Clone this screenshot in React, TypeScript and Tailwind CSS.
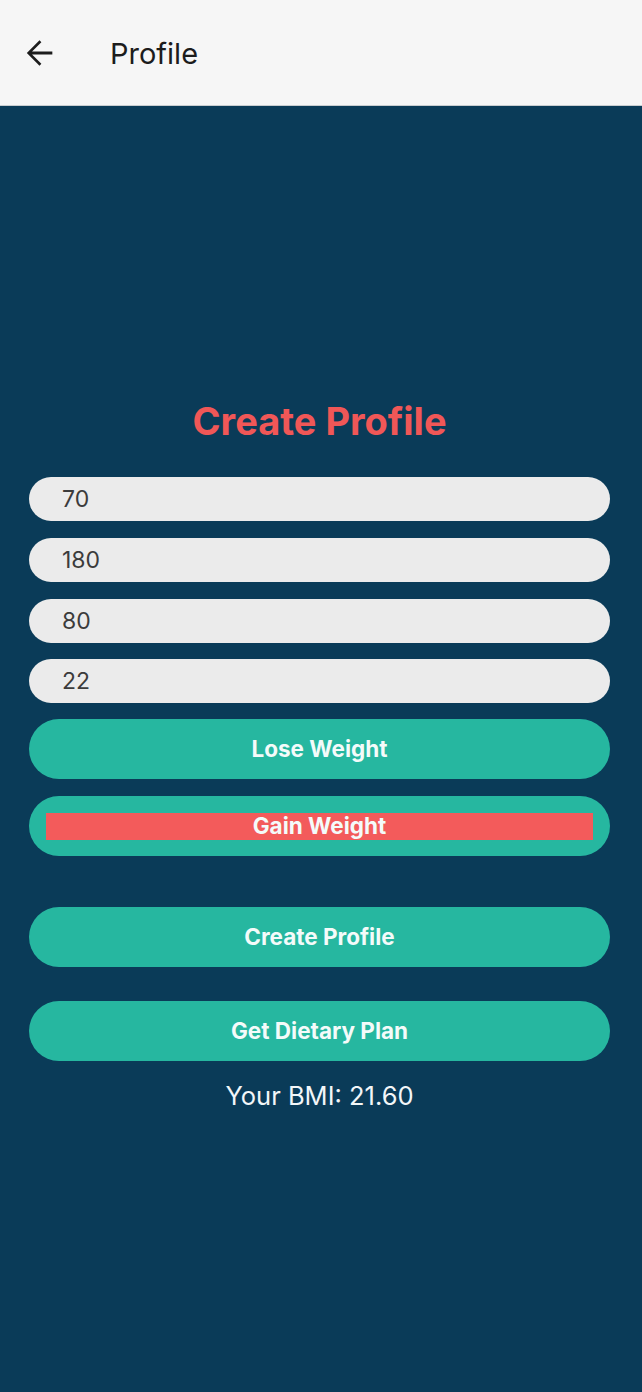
import React from 'react';

const font = { fontFamily: 'Inter, "Noto Sans", sans-serif' };

function Field({ value }: { value: string }) {
  return (
    <div className="h-[44px] w-full rounded-full bg-[#ebebeb] flex items-center pl-[33px] text-[23px] text-[#3b3b3b]">
      {value}
    </div>
  );
}

function TealButton({ label }: { label: string }) {
  return (
    <button className="h-[60px] w-full rounded-full bg-[#26b7a0] flex items-center justify-center text-[22.5px] font-bold text-[#f4fbfa]">
      {label}
    </button>
  );
}

export default function App() {
  return (
    <div className="min-h-screen flex flex-col bg-[#0a3b58]" style={font}>
      {/* Header */}
      <header className="h-[106px] shrink-0 bg-[#f6f6f6] border-b border-[#c9cdd0] flex items-center">
        <svg
          className="ml-[19px]"
          width="40"
          height="40"
          viewBox="0 0 24 24"
          fill="#1c1c1c"
        >
          <path d="M20 11.1H7.83l5.59-5.59L12.3 4.4l-7.6 7.6 7.6 7.6 1.12-1.12-5.59-5.58H20v-1.8z" />
        </svg>
        <span className="ml-[51px] pt-[3px] text-[29px] text-[#1c1c1c]">Profile</span>
      </header>

      {/* Form */}
      <main className="flex-1 flex flex-col pl-[29px] pr-[32px]">
        <h1 className="mt-[292px] text-center text-[38px] leading-[46px] font-bold text-[#f05757]">
          Create Profile
        </h1>

        <div className="mt-[33px] flex flex-col gap-[17px]">
          <Field value="70" />
          <Field value="180" />
          <Field value="80" />
          <div className="-mt-px">
            <Field value="22" />
          </div>
          <div className="-mt-px">
            <TealButton label="Lose Weight" />
          </div>
          <button className="h-[60px] w-full rounded-full bg-[#26b7a0] flex items-center px-[17px]">
            <span className="w-full h-[27px] bg-[#f35b5b] flex items-center justify-center text-[22.5px] font-bold text-[#f4fbfa] leading-none">
              Gain Weight
            </span>
          </button>
        </div>

        <div className="mt-[51px]">
          <TealButton label="Create Profile" />
        </div>
        <div className="mt-[34px]">
          <TealButton label="Get Dietary Plan" />
        </div>

        <p className="mt-[19px] text-center text-[25.5px] leading-[31px] text-[#f2f6f8]">
          Your BMI: 21.60
        </p>
      </main>
    </div>
  );
}
